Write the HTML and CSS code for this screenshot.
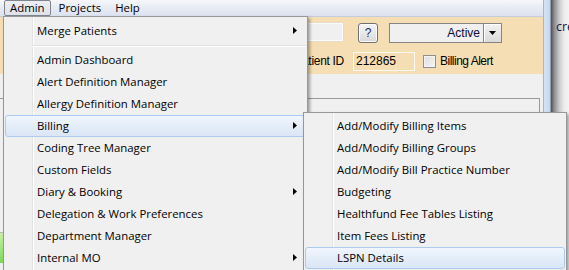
FILE: index.html
```html
<!DOCTYPE html>
<html lang="en">

<head>
  <meta charset="UTF-8" />
  <title>Admin menu</title>
  <link rel="stylesheet" href="styles.css">
</head>

<body>
  <div class="desktop">
    <div class="window">
      <div class="client">
        <div class="menubar">
          <span class="menubar-item open">Admin</span>
          <span class="menubar-item">Projects</span>
          <span class="menubar-item">Help</span>
        </div>
        <div class="patient-bar">
          <div class="bar-row">
            <span class="textbox search-box"></span>
            <span class="help-btn">?</span>
            <span class="combo">
              <span class="combo-value">Active</span>
              <span class="combo-btn"><span class="down-arrow"></span></span>
            </span>
          </div>
          <div class="bar-row">
            <span class="field-label">Patient ID</span>
            <span class="textbox id-box">212865</span>
            <span class="check-box"></span>
            <span class="check-label">Billing Alert</span>
          </div>
        </div>
        <div class="content">
          <div class="group">
            <div class="group-strip"></div>
          </div>
        </div>
      </div>
      <div class="frame"></div>
    </div>
    <div class="other-window">
      <span class="other-text">cre</span>
    </div>

    <ul class="menu main-menu">
      <li class="has-sub">Merge Patients</li>
      <li class="sep"></li>
      <li>Admin Dashboard</li>
      <li>Alert Definition Manager</li>
      <li>Allergy Definition Manager</li>
      <li class="has-sub hot">Billing</li>
      <li>Coding Tree Manager</li>
      <li>Custom Fields</li>
      <li class="has-sub">Diary &amp; Booking</li>
      <li>Delegation &amp; Work Preferences</li>
      <li>Department Manager</li>
      <li class="has-sub">Internal MO</li>
    </ul>

    <ul class="menu sub-menu">
      <li>Add/Modify Billing Items</li>
      <li>Add/Modify Billing Groups</li>
      <li>Add/Modify Bill Practice Number</li>
      <li>Budgeting</li>
      <li>Healthfund Fee Tables Listing</li>
      <li>Item Fees Listing</li>
      <li class="hot">LSPN Details</li>
    </ul>
  </div>
</body>

</html>
```

FILE: styles.css
```css
body {
  margin: 0;
  overflow: hidden;
  background: #f0f0f0;
}

.desktop {
  width: 569px;
  height: 270px;
  display: flex;
  position: relative;
  overflow: hidden;
}

.window {
  width: 551px;
  display: flex;
  flex-shrink: 0;
}

.client {
  width: 543px;
  display: flex;
  flex-direction: column;
}

/* menu bar */
.menubar {
  height: 16px;
  display: flex;
  padding-left: 4px;
  border-bottom: 1px solid #c4cddd;
  background: linear-gradient(#f6f7fa, #e9edf5 40%, #dbe2ef);
  font-family: "Open Sans", "Noto Sans", sans-serif;
  font-size: 11.4px;
  color: #000;
}

.menubar-item {
  height: 14px;
  line-height: 14px;
  padding: 0 5px;
  margin-right: 2px;
  border: 1px solid transparent;
  border-radius: 2px;
}

.menubar-item.open {
  border-color: #80858d;
  background: linear-gradient(#eceef2, #dde2ea);
}

/* patient bar */
.patient-bar {
  height: 57px;
  padding: 6px 0 0 250px;
  background: #f5deb3;
  font-family: "Liberation Sans", Arial, sans-serif;
  font-size: 11px;
  color: #000;
  box-sizing: border-box;
}

.bar-row {
  display: flex;
  align-items: center;
  height: 20px;
}

.bar-row + .bar-row {
  margin-top: 8px;
}

.textbox {
  box-sizing: border-box;
  display: block;
}

.search-box {
  width: 93px;
  height: 18px;
  background: #f0f0f0;
  border: 1px solid #fbfbfb;
  box-shadow: 0 0 0 1px #e6dcc8;
  align-self: flex-start;
}

.help-btn {
  width: 20px;
  height: 20px;
  margin-left: 15px;
  box-sizing: border-box;
  border: 1px solid #707070;
  border-radius: 3px;
  background: linear-gradient(#f4f4f4, #e8e8e8 50%, #d8d8d8);
  box-shadow: inset 0 0 0 1px #fcfcfc;
  color: #1a2a6a;
  text-align: center;
  line-height: 18px;
  font-size: 12px;
}

.combo {
  display: flex;
  margin-left: 11px;
  height: 20px;
}

.combo-value {
  width: 95px;
  box-sizing: border-box;
  border: 1px solid #858585;
  background: #f0f0f0;
  text-align: right;
  padding-right: 3px;
  line-height: 18px;
  font-size: 12px;
  color: #0a0a3a;
}

.combo-btn {
  width: 18px;
  box-sizing: border-box;
  border: 1px solid #858585;
  border-left: none;
  background: linear-gradient(#f2f2f2, #dadada);
  box-shadow: inset 1px 1px 0 #fff;
  display: flex;
  align-items: center;
  justify-content: center;
}

.down-arrow {
  width: 7px;
  height: 4px;
  background: #000;
  clip-path: polygon(0 0, 100% 0, 50% 100%);
}

.field-label {
  width: 94px;
  text-align: right;
  font-size: 12px;
  letter-spacing: -0.3px;
}

.id-box {
  width: 62px;
  height: 19px;
  margin-left: 9px;
  border: 1px solid #fffaf1;
  padding-left: 2px;
  line-height: 17px;
  font-size: 12px;
}

.check-box {
  width: 13px;
  height: 13px;
  margin-left: 8px;
  box-sizing: border-box;
  border: 1px solid #8e8f8f;
  background: linear-gradient(135deg, #dcdcdc, #f6f6f6);
  box-shadow: inset 0 0 0 1px #f4f4f4;
}

.check-label {
  margin-left: 4px;
  font-size: 12px;
  letter-spacing: -0.5px;
}

/* lower content */
.content {
  flex: 1;
  background: #f0f0f0;
  padding-top: 24px;
  display: flex;
}

.group {
  flex: 1;
  margin: 0 3px 0 -2px;
  border: 1px solid #9a9a9a;
  border-bottom: none;
}

.group-strip {
  width: 40px;
  height: 30px;
  margin-top: 133px;
  border-top: 1px solid #b8b8b8;
  background: linear-gradient(#c9f0a8, #7ed957);
}

/* window frame and the window behind */
.frame {
  width: 8px;
  box-sizing: border-box;
  border-left: 1px solid #a9b6c8;
  border-right: 1px solid #8e9db2;
  background: linear-gradient(to right, #d6e3f3, #c6d8ee);
}

.other-window {
  flex: 1;
  background: linear-gradient(to right, #505050, #8a8a8a 3px, #c8c8c8 8px, #ececec 13px, #f4f4f4);
  padding: 17px 0 0 5px;
  overflow: hidden;
}

.other-text {
  font-family: "Open Sans", "Noto Sans", sans-serif;
  font-size: 12.5px;
  color: #15154a;
  white-space: nowrap;
}

/* dropdown menus */
.menu {
  position: absolute;
  margin: 0;
  padding: 3px 1px;
  list-style: none;
  box-sizing: border-box;
  border: 1px solid #979797;
  background:
    linear-gradient(to right, transparent 28px, #e2e3e3 28px, #e2e3e3 29px, #fff 29px, #fff 30px, transparent 30px),
    #f0f0f0;
  box-shadow: 2px 2px 3px rgba(0, 0, 0, 0.35);
  font-family: "Open Sans", "Noto Sans", sans-serif;
  font-size: 11.4px;
  color: #000;
}

.main-menu {
  left: 3px;
  top: 16px;
  width: 305px;
  height: 300px;
}

.sub-menu {
  left: 303px;
  top: 112px;
  width: 264px;
  height: 170px;
  padding-top: 2px;
}

.menu li {
  position: relative;
  height: 20px;
  line-height: 20px;
  padding-left: 31px;
  border: 1px solid transparent;
  border-radius: 3px;
  white-space: nowrap;
}

.menu li.hot {
  border-color: #aacbee;
  background: linear-gradient(#f1f6fd, #e4edf9 50%, #dae6f6);
}

.menu li.sep {
  height: 7px;
  margin-left: 26px;
  padding: 0;
  border: none;
  border-radius: 0;
  background: linear-gradient(transparent 3px, #e0e0e0 3px, #e0e0e0 4px, #fff 4px, #fff 5px, transparent 5px);
}

.menu li.has-sub::after {
  content: "";
  position: absolute;
  right: 8px;
  top: 6px;
  width: 4px;
  height: 7px;
  background: #000;
  clip-path: polygon(0 0, 100% 50%, 0 100%);
}
```
